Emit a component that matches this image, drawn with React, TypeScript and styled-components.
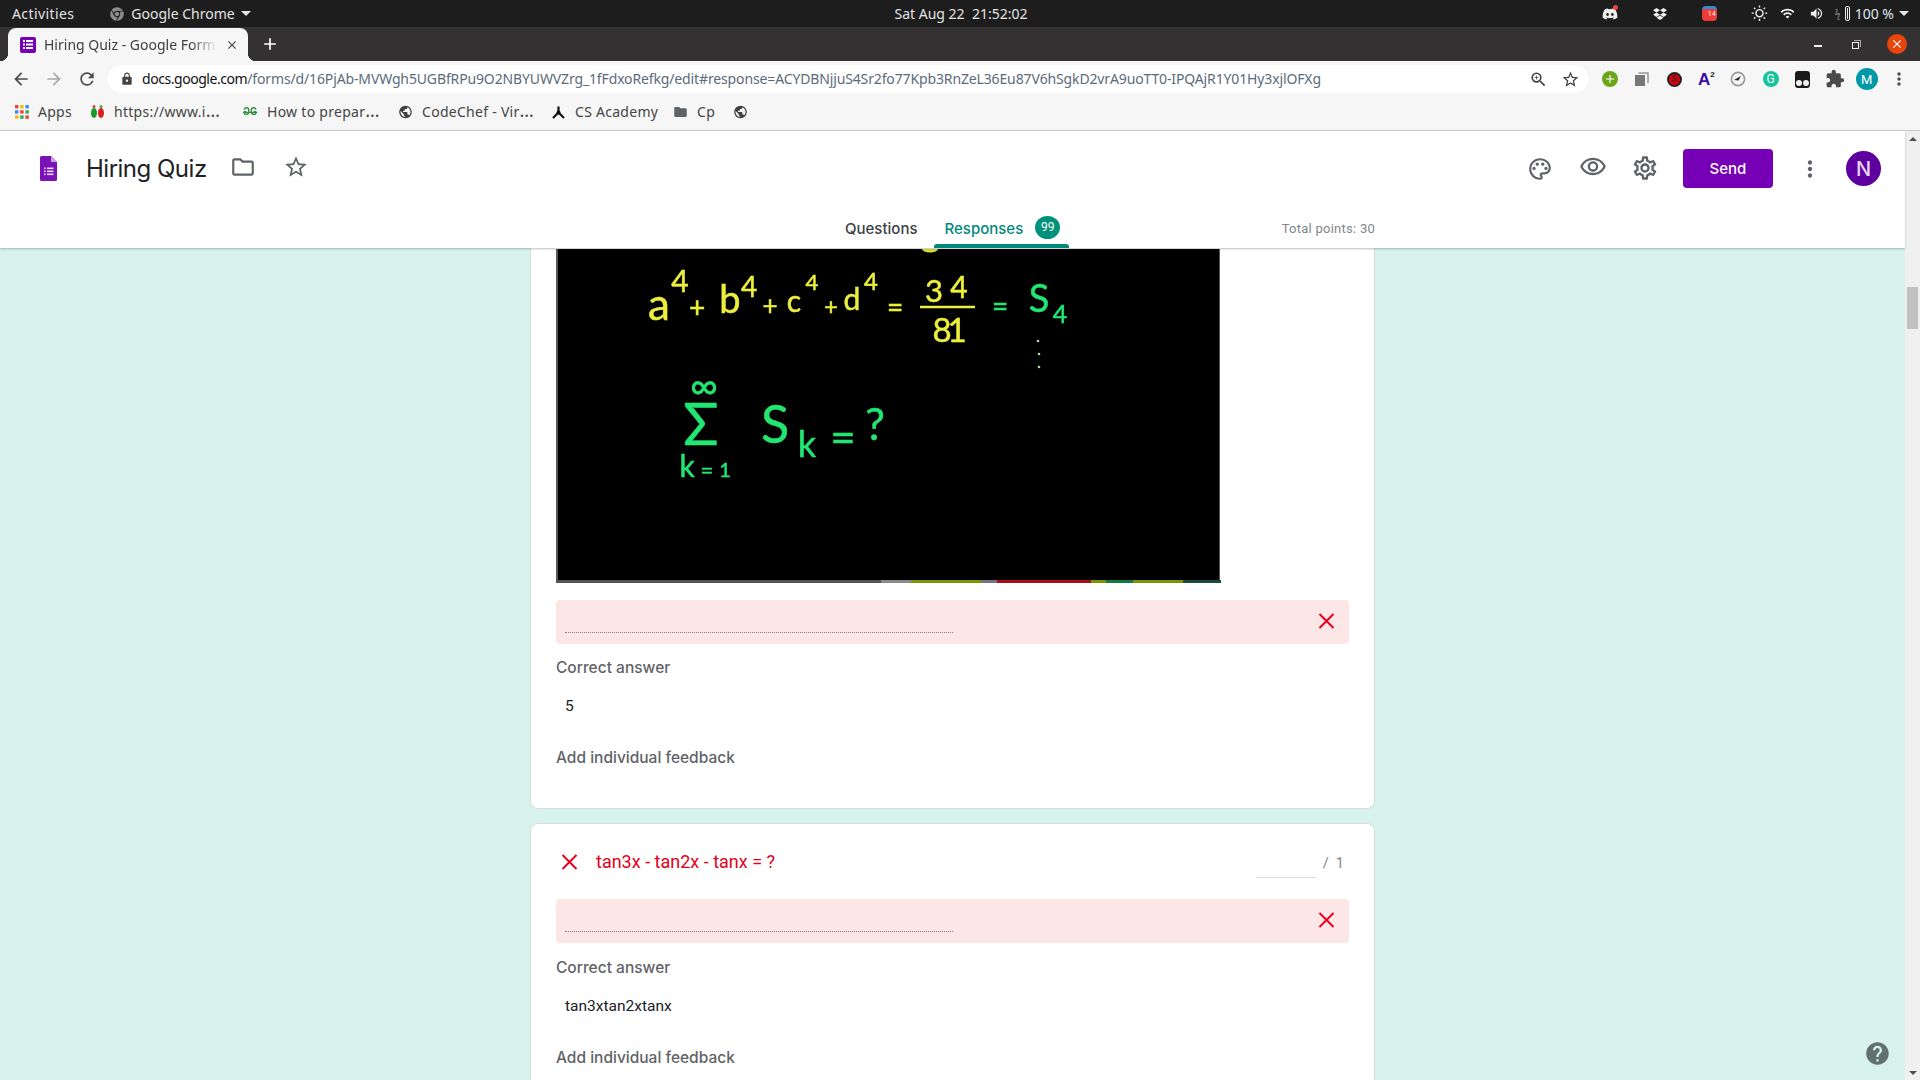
import React from "react";
import styled, { createGlobalStyle } from "styled-components";
import { FaChrome, FaDiscord, FaDropbox } from "react-icons/fa";
import {
  MdArrowBack, MdArrowForward, MdRefresh, MdLock, MdZoomIn, MdStarBorder, MdExtension, MdPublic, MdFolder,
  MdOutlineFolder, MdOutlinePalette, MdOutlineVisibility, MdOutlineSettings, MdMoreVert, MdHelp, MdAdd, MdClose,
  MdWifi, MdVolumeUp, MdOutlineWbSunny,
} from "react-icons/md";

const UI = `"Noto Sans", "Open Sans", sans-serif`;
const G = `Inter, Roboto, sans-serif`;
const R = `Roboto, "Liberation Sans", sans-serif`;

const Global = createGlobalStyle`
  html, body { margin: 0; padding: 0; background: #d7f2ec; overflow: hidden; }
  * { box-sizing: border-box; }
`;

const Page = styled.div`
  width: 1920px; height: 1080px; display: flex; flex-direction: column; overflow: hidden;
`;

/* ---------- system bar ---------- */
const SystemBar = styled.div`
  height: 27px; flex: none; background: #1d1d1d; color: #e3e3e3; font: 14px/27px ${UI};
  display: grid; grid-template-columns: 1fr auto 1fr; padding: 0 11px 0 12px;
`;
const SysLeft = styled.div`display: flex; align-items: center;`;
const Activities = styled.span`letter-spacing: 0.4px;`;
const AppName = styled.span`display: flex; align-items: center; margin-left: 36px; gap: 7px; color: #e3e3e3;`;
const Caret = styled.span`
  width: 0; height: 0; border-left: 5px solid transparent; border-right: 5px solid transparent;
  border-top: 5px solid #e8e8e8; display: inline-block; margin-left: ${(p: { $ml?: number }) => p.$ml ?? 0}px;
`;
const Clock = styled.div`white-space: pre; font-size: 14px; padding-left: 1px;`;
const Tray = styled.div`display: flex; align-items: center; justify-content: flex-end;`;
const TraySlot = styled.span<{ $ml: number; $w: number }>`
  position: relative; display: flex; align-items: center; justify-content: center; color: #eee;
  margin-left: ${(p) => p.$ml}px; width: ${(p) => p.$w}px; font-size: ${(p) => p.$w}px;
`;
const RedDot = styled.i`
  position: absolute; top: -1px; right: 0; width: 5px; height: 5px; border-radius: 50%; background: #f04040;
`;
const CalendarBadge = styled.span`
  width: 15px; height: 15px; border-radius: 4px; background: #ee3b36; border-top: 3px solid #2d8fd0;
  color: #fff; font: 7px/11px ${R}; text-align: right; padding-right: 1px;
`;
const BatteryBody = styled.span`
  width: 9px; height: 15px; border: 1.5px solid #eee; border-radius: 2px; padding: 1px; display: flex; margin-left: 5px;
  &::before { content: ""; flex: 1; background: #eee; }
`;
const BatteryBolt = styled.span`color: #888; font-size: 10px; line-height: 15px;`;
const TrayText = styled.span`font-size: 14px; color: #dfe6ee; margin-left: 5px; white-space: pre;`;

/* ---------- tab strip ---------- */
const TabStrip = styled.div`
  height: 34px; flex: none; background: #333132; display: flex; align-items: flex-end; padding-left: 8px;
  color: #fff;
`;
const BrowserTab = styled.div`
  position: relative; width: 240px; height: 33px; background: #f6f6f6; border-radius: 8px 8px 0 0;
  display: flex; align-items: center; padding: 0 9px 0 12px; gap: 8px; color: #3c4043; font: 14px/33px ${UI};
  &::before, &::after { content: ""; position: absolute; bottom: 0; width: 8px; height: 8px; }
  &::before { left: -8px; background: radial-gradient(circle at 0 0, #333132 8px, #f6f6f6 8.5px); }
  &::after { right: -8px; background: radial-gradient(circle at 100% 0, #333132 8px, #f6f6f6 8.5px); }
`;
const TabFavicon = styled.span`
  width: 16px; height: 16px; background: #7600b5; border-radius: 2px; flex: none; display: flex; align-items: center; justify-content: center;
`;
const TabTitle = styled.span`
  flex: 1; white-space: nowrap; overflow: hidden;
  -webkit-mask-image: linear-gradient(to right, #000 85%, transparent 100%);
  mask-image: linear-gradient(to right, #000 85%, transparent 100%);
`;
const NewTab = styled.span`display: flex; margin-left: 12px; margin-bottom: 7px; font-size: 20px;`;
const WindowButtons = styled.div`
  margin-left: auto; display: flex; align-items: center; height: 34px; padding-right: 13px; color: #eee;
`;
const Minimize = styled.span`width: 8px; height: 1.5px; background: #eee; margin-top: 4px;`;
const Restore = styled.span`
  position: relative; width: 7px; height: 7px; border: 1px solid #eee; margin-left: 30px; margin-right: 28px; margin-top: 2px;
  &::after { content: ""; position: absolute; left: 1px; top: -3px; width: 6px; height: 6px; border-top: 1px solid #aaa; border-right: 1px solid #aaa; }
`;
const CloseCircle = styled.span`
  width: 20px; height: 20px; border-radius: 50%; background: #e8450d; color: #fff; display: flex; align-items: center; justify-content: center; font-size: 14px;
`;

/* ---------- toolbar ---------- */
const Toolbar = styled.div`
  height: 36px; flex: none; background: #f6f6f6; display: flex; align-items: center; padding: 0 0 0 4px;
`;
const NavSlot = styled.span<{ $c?: string }>`
  width: 33px; display: flex; justify-content: center; font-size: 20px; color: ${(p) => p.$c ?? "#4a4a4a"};
`;
const Omnibox = styled.div`
  margin: 0 6px 0 5px; width: 1480px; height: 28px; border-radius: 14px; background: #fff; display: flex; align-items: center; padding-left: 12px;
`;
const LockIcon = styled.span`display: flex; font-size: 14px; color: #444; width: 22px;`;
const Url = styled.div`
  width: 1182px; white-space: nowrap; overflow: hidden; font: 14px/28px ${UI}; color: #5c6b7a; letter-spacing: -0.135px;
  b { font-weight: 400; color: #111; letter-spacing: -0.45px; }
`;
const OmniIcons = styled.div`margin-left: auto; display: flex; align-items: center; padding-right: 2px;`;
const OmniIcon = styled.span`width: 32px; display: flex; justify-content: center; color: #444; font-size: 19px;`;
const ExtSlot = styled.span`width: 32.1px; display: flex; justify-content: center; align-items: center; color: #4a4a4a; font-size: 20px;`;
const ExtCircle = styled.span<{ $bg: string; $size?: number; $ring?: string }>`
  width: ${(p) => p.$size ?? 16}px; height: ${(p) => p.$size ?? 16}px; border-radius: 50%; background: ${(p) => p.$bg};
  border: ${(p) => (p.$ring ? `2px solid ${p.$ring}` : "0")};
  color: #fff; display: flex; align-items: center; justify-content: center; font: 12px/1 ${R};
`;
const ExtSmall = styled.span`font-size: 9px; color: #222;`;
const ExtA = styled.span`
  font: 700 17px/1 "Liberation Sans", sans-serif; color: #3a0ca3; sup { font-size: 8px; color: #222; vertical-align: 8px; line-height: 0; }
`;
const ExtTamper = styled.span`
  width: 15px; height: 17px; border-radius: 3px; background: #1a1a1a; display: flex; align-items: flex-end; justify-content: center; gap: 1px; padding-bottom: 2px;
  &::before, &::after { content: ""; width: 6px; height: 6px; border-radius: 50%; background: #f2f2f2; }
`;
const ToolbarAvatar = styled(ExtCircle)`font-size: 13px;`;

/* ---------- bookmarks ---------- */
const Bookmarks = styled.div`
  height: 34px; flex: none; background: #f6f6f6; border-bottom: 1px solid #c9c9c9; display: flex; align-items: center; padding: 0 0 3px 15px;
  color: #444; font: 14px/20px ${UI}; letter-spacing: 0.28px;
`;
const Bookmark = styled.div<{ $w: number }>`
  display: flex; align-items: center; width: ${(p) => p.$w}px; flex: none; gap: 9px; white-space: nowrap;
`;
const BmIcon = styled.span<{ $c?: string }>`
  display: flex; width: 15px; font-size: 16px; flex: none; justify-content: center; color: ${(p) => p.$c ?? "#3c4043"};
`;
const Ell = styled.span`font-size: 18px; line-height: 14px;`;
const Gfg = styled.span`
  color: #2f8d46; font: 700 10px/1 ${R}; display: flex; width: 15px; text-decoration: line-through;
  i { font-style: normal; display: inline-block; transform: scaleX(-1); }
`;

/* ---------- body ---------- */
const Body = styled.div`flex: 1; min-height: 0; display: flex;`;
const Viewport = styled.div`flex: 1; min-width: 0; display: flex; flex-direction: column;`;
const Scrollbar = styled.div`
  width: 15px; flex: none; background: #f0f0f0; display: flex; flex-direction: column; align-items: center; justify-content: space-between; padding: 6px 0 5px;
`;
const ScrollUp = styled.span`width: 0; height: 0; border-left: 4px solid transparent; border-right: 4px solid transparent; border-bottom: 4px solid #505050;`;
const ScrollDown = styled.span`width: 0; height: 0; border-left: 4px solid transparent; border-right: 4px solid transparent; border-top: 4px solid #505050;`;
const ScrollThumb = styled.span`width: 11px; height: 42px; background: #c1c1c1; margin-bottom: 596px;`;

const FormHeader = styled.header`
  height: 117px; flex: none; background: #fff; box-shadow: 0 1px 2px rgba(60,64,67,.35); position: relative; z-index: 2;
  display: flex; flex-direction: column;
`;
const HeaderTop = styled.div`height: 75px; flex: none; display: flex; align-items: center; padding: 0 24px 0 40px;`;
const FormIcon = styled.svg`width: 17px; height: 25px; flex: none; margin-right: 29px;`;
const FormTitle = styled.h1`
  margin: 0 23px 0 0; font: 400 24px/32px ${G}; color: #202124; letter-spacing: -0.5px; white-space: nowrap;
`;
const HeaderIcon = styled.span<{ $size: number; $ml: number; $mt?: number }>`
  display: flex; color: #5f6368; font-size: ${(p) => p.$size}px; margin-left: ${(p) => p.$ml}px; margin-top: ${(p) => p.$mt ?? 0}px;
`;
const Spacer = styled.div`flex: 1;`;
const SendButton = styled.button`
  width: 90px; height: 39px; border: 0; border-radius: 4px; background: #7600b5; color: #fff; font: 500 15px/39px ${G};
  margin-left: 24.5px; padding: 0;
`;
const HeaderAvatar = styled.span`
  width: 35px; height: 35px; border-radius: 50%; background: #5e00a0; color: #e6d6f2; display: flex; align-items: center; justify-content: center;
  font: 500 20px/1 ${G}; margin-left: 23px;
`;
const TabRow = styled.nav`
  width: 845px; margin: 0 auto; flex: 1; display: flex; align-items: stretch; padding-left: 315px; padding-right: 0;
  font: 450 15px/20px ${G};
`;
const FormTab = styled.div<{ $active?: boolean; $pad: string }>`
  position: relative; display: flex; align-items: center; padding: ${(p) => p.$pad}; margin-top: 3px; color: ${(p) => (p.$active ? "#00897b" : "#3c4043")};
  ${(p) => p.$active && `&::after { content: ""; position: absolute; left: 0; right: 0; bottom: 0; height: 4px; background: #00897b; border-radius: 3px 3px 0 0; }`}
`;
const TabBadge = styled.span`
  width: 25px; height: 23px; border-radius: 50%; background: #00917a; color: #fff; font: 400 12px/23px ${R}; text-align: center; margin-left: 12px; margin-top: -3px;
`;
const TotalPoints = styled.div`
  margin-left: auto; align-self: center; margin-top: 4px; font: 400 13px/20px ${R}; color: #80868b; letter-spacing: 0.25px;
`;

const Content = styled.main`
  position: relative; flex: 1; min-height: 0; overflow: hidden; background: #d7f2ec; display: flex; flex-direction: column; align-items: center; gap: 14px;
`;
const Card = styled.section`
  width: 845px; flex: none; background: #fff; border: 1px solid #dadce0; border-radius: 8px; padding: 0 25px;
`;
const ClippedCard = styled(Card)`
  height: 561px; border-top: 0; border-radius: 0 0 8px 8px; padding-top: 1px;
`;
const TallCard = styled(Card)`height: 340px;`;
const FigureSvg = styled.svg`
  display: block; width: 666px; height: 334px;
  text { font-family: Lato, "DejaVu Sans", sans-serif; text-anchor: middle; stroke-width: 0.5px; }
`;
const AnswerBox = styled.div<{ $mt: number }>`
  margin-top: ${(p) => p.$mt}px; height: 44px; background: #fde6e6; border-radius: 4px; display: flex; align-items: center; justify-content: space-between; padding: 0 14px 0 9px;
`;
const DottedLine = styled.div`
  width: 388px; margin-top: 21px; border-bottom: 1px dotted #8a7c7c;
`;
const CrossIcon = styled.svg<{ $mt?: number }>`width: 17px; height: 16px; flex: none; margin-top: ${(p) => p.$mt ?? 0}px;`;
const Label = styled.div<{ $mt: number }>`
  margin-top: ${(p) => p.$mt}px; font: 500 15.5px/20px ${G}; color: #5f6368;
`;
const Value = styled.div`
  margin-top: 18px; padding-left: 9px; font: 400 15.5px/20px ${R}; color: #202124;
`;
const QuestionRow = styled.div`
  display: flex; align-items: center; margin-top: 24px; height: 30px; padding: 0 5px 0 5px;
`;
const QuestionTitle = styled.div`
  margin-left: 18px; font: 400 18px/24px ${R}; color: #e3001b; margin-top: -2px;
`;
const PointsInput = styled.div`
  margin-left: auto; width: 60px; height: 30px; border-bottom: 1px solid #dadce0;
`;
const PointsMax = styled.div`
  margin-left: 7px; font: 400 14.5px/20px ${R}; color: #80868b; white-space: pre; margin-top: 2px;
`;
const HelpButton = styled.span`
  position: absolute; right: 14px; bottom: 13px; font-size: 27px; display: flex; color: #62706e;
`;

const Cross = ({ mt }: { mt?: number }) => (
  <CrossIcon viewBox="0 0 17 16" $mt={mt}>
    <path d="M1.5 1 L15.5 15 M15.5 1 L1.5 15" stroke="#e4001e" strokeWidth="2" fill="none" />
  </CrossIcon>
);

const Y = "#ecf03c";
const N = "#22e672";
type Glyph = [string, number, number, number, string];
const glyphs: Glyph[] = [
  ["a", 659, 320, 44, Y], ["4", 680, 292, 30, Y], ["+", 697, 318, 28, Y],
  ["b", 730, 313, 38, Y], ["4", 749, 297, 28, Y], ["+", 770, 315, 26, Y],
  ["c", 794, 312, 30, Y], ["4", 812, 290, 22, Y], ["+", 831, 315, 24, Y],
  ["d", 852, 310, 30, Y], ["4", 871, 290, 24, Y], ["=", 895, 317, 28, Y],
  ["3", 934, 302, 31, Y], ["4", 959, 298, 30, Y], ["8", 942, 342, 33, Y], ["1", 957, 342, 33, Y],
  ["=", 1000, 316, 28, N], ["S", 1039, 312, 38, N], ["4", 1060, 323, 25, N],
  ["∞", 704, 399, 38, N], ["Σ", 701, 445, 58, N], ["S", 775, 443, 52, N], ["k", 807, 457, 36, N],
  ["=", 843, 453, 44, N], ["?", 875, 440, 44, N], ["k", 687, 477, 30, N], ["=", 707, 478, 22, N], ["1", 725, 477, 20, N],
];
const strip: [number, number, string][] = [
  [881, 30, "#8a8a8a"], [911, 71, "#7d9400"], [982, 15, "#7a6f86"], [997, 94, "#a80c1c"],
  [1091, 15, "#7d9400"], [1106, 27, "#0f7a44"], [1133, 50, "#7d9400"], [1183, 38, "#1a4a40"],
];

const Figure = () => (
  <FigureSvg viewBox="556 249 666 334">
    <rect x="556" y="249" width="666" height="334" fill="#fff" />
    <rect x="556" y="249" width="664" height="334" fill="#555" />
    <rect x="558" y="249" width="661" height="331" fill="#000" />
    {strip.map(([x, w, c]) => <rect key={x} x={x} y="580" width={w} height="3" fill={c} />)}
    <ellipse cx="930" cy="249" rx="8" ry="3.5" fill="#d8dc40" />
    <g style={{ filter: "blur(0.35px)" }}>
      {glyphs.map(([t, x, y, s, c], i) => <text key={i} x={x} y={y} fontSize={s} fill={c} stroke={c}>{t}</text>)}
      <line x1="920" y1="307" x2="975" y2="307" stroke={Y} strokeWidth="2.4" />
      <circle cx="1038" cy="341" r="1.3" fill="#b5d8a8" />
      <circle cx="1039" cy="354" r="1.3" fill="#b5d8a8" />
      <circle cx="1039" cy="367" r="1.3" fill="#b5d8a8" />
    </g>
  </FigureSvg>
);

const AppsGrid = () => (
  <svg width="14" height="14" viewBox="0 0 14 14">
    {[["#ea4335", "#fbbc05", "#4285f4"], ["#4285f4", "#ea4335", "#34a853"], ["#fbbc05", "#34a853", "#ea4335"]].map((row, r) =>
      row.map((c, i) => <rect key={`${r}${i}`} x={i * 5.2} y={r * 5.2} width="3.4" height="3.4" fill={c} />))}
  </svg>
);

export default function App() {
  return (
    <Page>
      <Global />
      <SystemBar>
        <SysLeft>
          <Activities>Activities</Activities>
          <AppName><FaChrome size={14} color="#8c8c8c" />Google Chrome<Caret $ml={-1} /></AppName>
        </SysLeft>
        <Clock>Sat Aug 22  21:52:02</Clock>
        <Tray>
          <TraySlot $ml={0} $w={16}><FaDiscord /><RedDot /></TraySlot>
          <TraySlot $ml={35} $w={14}><FaDropbox /></TraySlot>
          <TraySlot $ml={35} $w={15}><CalendarBadge>14</CalendarBadge></TraySlot>
          <TraySlot $ml={34} $w={17}><MdOutlineWbSunny /></TraySlot>
          <TraySlot $ml={12} $w={15}><MdWifi /></TraySlot>
          <TraySlot $ml={14} $w={15}><MdVolumeUp /></TraySlot>
          <TraySlot $ml={11} $w={15}><BatteryBolt>ϟ</BatteryBolt><BatteryBody /></TraySlot>
          <TrayText>100 %</TrayText>
          <Caret $ml={5} />
        </Tray>
      </SystemBar>

      <TabStrip>
        <BrowserTab>
          <TabFavicon>
            <svg width="10" height="9" viewBox="0 0 10 9" fill="#fff">
              <rect x="0" y="0" width="2" height="2" /><rect x="3" y="0" width="7" height="2" />
              <rect x="0" y="3.5" width="2" height="2" /><rect x="3" y="3.5" width="7" height="2" />
              <rect x="0" y="7" width="2" height="2" /><rect x="3" y="7" width="7" height="2" />
            </svg>
          </TabFavicon>
          <TabTitle>Hiring Quiz - Google Forms</TabTitle>
          <MdClose size={14} color="#444" />
        </BrowserTab>
        <NewTab><MdAdd /></NewTab>
        <WindowButtons>
          <Minimize />
          <Restore />
          <CloseCircle><MdClose /></CloseCircle>
        </WindowButtons>
      </TabStrip>

      <Toolbar>
        <NavSlot><MdArrowBack /></NavSlot>
        <NavSlot $c="#a8a8a8"><MdArrowForward /></NavSlot>
        <NavSlot><MdRefresh /></NavSlot>
        <Omnibox>
          <LockIcon><MdLock /></LockIcon>
          <Url><b>docs.google.com</b>/forms/d/16PjAb-MVWgh5UGBfRPu9O2NBYUWVZrg_1fFdxoRefkg/edit#response=ACYDBNjjuS4Sr2fo77Kpb3RnZeL36Eu87V6hSgkD2vrA9uoTT0-IPQAjR1Y01Hy3xjlOFXg</Url>
          <OmniIcons>
            <OmniIcon><MdZoomIn /></OmniIcon>
            <OmniIcon><MdStarBorder /></OmniIcon>
          </OmniIcons>
        </Omnibox>
        <ExtSlot><ExtCircle $bg="#6aa51a"><MdAdd size={14} /></ExtCircle></ExtSlot>
        <ExtSlot>
          <svg width="14" height="14" viewBox="0 0 14 14"><rect x="0" y="3" width="10" height="11" fill="#777" /><path d="M3.5 1 H13 V11" fill="none" stroke="#999" strokeWidth="1.6" /></svg>
        </ExtSlot>
        <ExtSlot><ExtCircle $bg="#d8000c" $size={15} $ring="#222"><ExtSmall>S</ExtSmall></ExtCircle></ExtSlot>
        <ExtSlot><ExtA>A<sup>2</sup></ExtA></ExtSlot>
        <ExtSlot>
          <svg width="16" height="16" viewBox="0 0 16 16"><circle cx="8" cy="8" r="6.6" fill="none" stroke="#999" strokeWidth="1.6" /><path d="M4 9 L11 5 L8.5 9.5 Z" fill="#222" /></svg>
        </ExtSlot>
        <ExtSlot><ExtCircle $bg="#15c39a">G</ExtCircle></ExtSlot>
        <ExtSlot><ExtTamper /></ExtSlot>
        <ExtSlot><MdExtension /></ExtSlot>
        <ExtSlot><ToolbarAvatar $bg="#0097a7" $size={22}>M</ToolbarAvatar></ExtSlot>
        <ExtSlot><MdMoreVert /></ExtSlot>
      </Toolbar>

      <Bookmarks>
        <Bookmark $w={75}><AppsGrid /><span>Apps</span></Bookmark>
        <Bookmark $w={153}>
          <svg width="15" height="16" viewBox="0 0 15 16"><ellipse cx="4" cy="9" rx="3" ry="5" fill="#1a9a2a" /><ellipse cx="11" cy="9" rx="3" ry="5" fill="#d8201c" /><circle cx="4" cy="2.5" r="1.5" fill="#c44" /><circle cx="11" cy="2.5" r="1.5" fill="#4a4" /></svg>
          <span>https://www.i<Ell>…</Ell></span>
        </Bookmark>
        <Bookmark $w={155}><Gfg><i>G</i>G</Gfg><span>How to prepar<Ell>…</Ell></span></Bookmark>
        <Bookmark $w={153}><BmIcon><MdPublic /></BmIcon><span>CodeChef - Vir<Ell>…</Ell></span></Bookmark>
        <Bookmark $w={122}>
          <svg width="15" height="15" viewBox="0 0 15 15"><path d="M7.5 7 V1.5 M7.5 7.5 L2 13 M7.5 7.5 L13 13" stroke="#111" strokeWidth="2.2" fill="none" /><circle cx="7.5" cy="7.5" r="2" fill="#111" /></svg>
          <span>CS Academy</span>
        </Bookmark>
        <Bookmark $w={60}><BmIcon $c="#5f6368"><MdFolder /></BmIcon><span>Cp</span></Bookmark>
        <Bookmark $w={20}><BmIcon><MdPublic /></BmIcon></Bookmark>
      </Bookmarks>

      <Body>
        <Viewport>
          <FormHeader>
            <HeaderTop>
              <FormIcon viewBox="0 0 17 25">
                <path d="M1.5 0 H11 L17 6 V23.5 A1.5 1.5 0 0 1 15.5 25 H1.5 A1.5 1.5 0 0 1 0 23.5 V1.5 A1.5 1.5 0 0 1 1.5 0 Z" fill="#7b12b8" />
                <path d="M11 0 L17 6 H11 Z" fill="#c9a0e0" />
                <g fill="#ead8f5">
                  <rect x="4" y="11.5" width="1.6" height="1.6" /><rect x="7" y="11.5" width="6.5" height="1.6" />
                  <rect x="4" y="14.5" width="1.6" height="1.6" /><rect x="7" y="14.5" width="6.5" height="1.6" />
                  <rect x="4" y="17.5" width="1.6" height="1.6" /><rect x="7" y="17.5" width="6.5" height="1.6" />
                </g>
              </FormIcon>
              <FormTitle>Hiring Quiz</FormTitle>
              <HeaderIcon $size={26} $ml={0} $mt={-3}><MdOutlineFolder /></HeaderIcon>
              <HeaderIcon $size={26} $ml={27} $mt={-3}><MdStarBorder /></HeaderIcon>
              <Spacer />
              <HeaderIcon $size={26} $ml={0}><MdOutlinePalette /></HeaderIcon>
              <HeaderIcon $size={28} $ml={26} $mt={-3}><MdOutlineVisibility /></HeaderIcon>
              <HeaderIcon $size={28} $ml={24} $mt={-2}><MdOutlineSettings /></HeaderIcon>
              <SendButton>Send</SendButton>
              <HeaderIcon $size={26} $ml={24}><MdMoreVert /></HeaderIcon>
              <HeaderAvatar>N</HeaderAvatar>
            </HeaderTop>
            <TabRow>
              <FormTab $pad="0 16px 0 0">Questions</FormTab>
              <FormTab $active $pad="0 9px 0 11px">Responses<TabBadge>99</TabBadge></FormTab>
              <TotalPoints>Total points: 30</TotalPoints>
            </TabRow>
          </FormHeader>
          <Content>
            <ClippedCard>
              <Figure />
              <AnswerBox $mt={17}><DottedLine /><Cross mt={-3} /></AnswerBox>
              <Label $mt={14}>Correct answer</Label>
              <Value>5</Value>
              <Label $mt={32}>Add individual feedback</Label>
            </ClippedCard>
            <TallCard>
              <QuestionRow>
                <Cross mt={-3} />
                <QuestionTitle>tan3x - tan2x - tanx = ?</QuestionTitle>
                <PointsInput />
                <PointsMax>/  1</PointsMax>
              </QuestionRow>
              <AnswerBox $mt={21}><DottedLine /><Cross mt={-3} /></AnswerBox>
              <Label $mt={15}>Correct answer</Label>
              <Value>tan3xtan2xtanx</Value>
              <Label $mt={32}>Add individual feedback</Label>
            </TallCard>
            <HelpButton><MdHelp /></HelpButton>
          </Content>
        </Viewport>
        <Scrollbar>
          <ScrollUp />
          <ScrollThumb />
          <ScrollDown />
        </Scrollbar>
      </Body>
    </Page>
  );
}
